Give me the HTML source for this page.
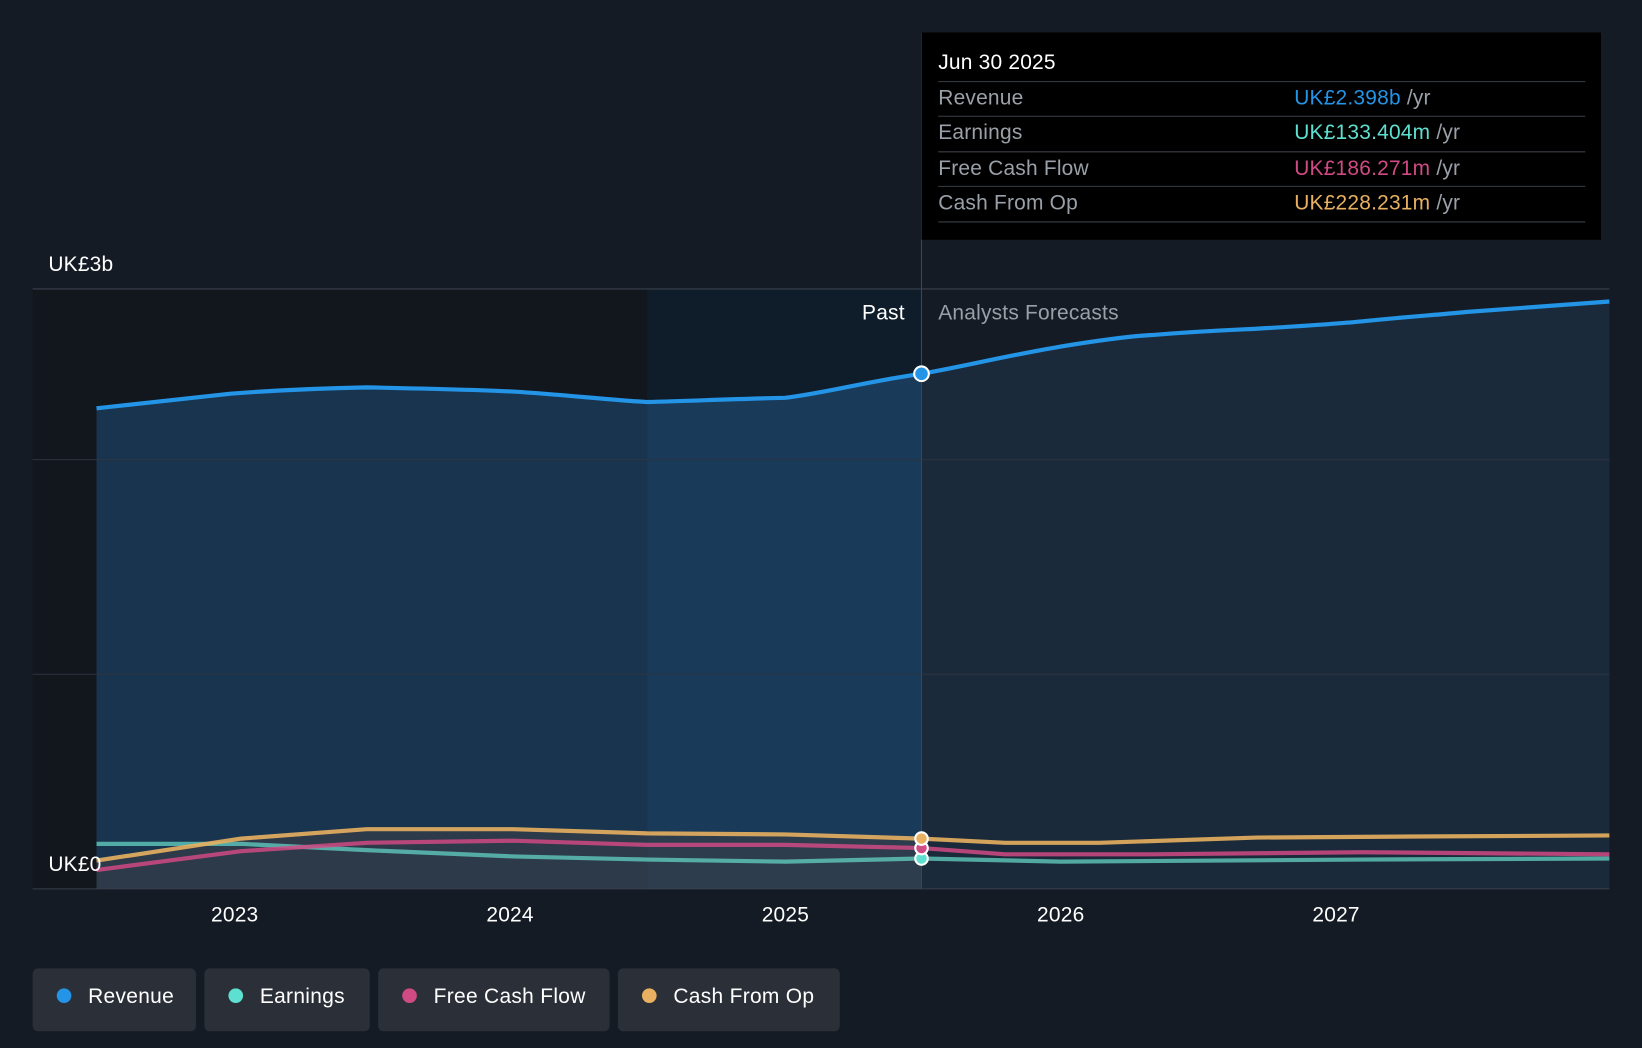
<!DOCTYPE html>
<html><head><meta charset="utf-8"><style>
html,body{margin:0;padding:0;background:#151b24;overflow:hidden}
svg{display:block;font-family:"Liberation Sans",sans-serif}
</style></head><body>
<svg width="1642" height="1048" viewBox="0 0 1568 1001" xmlns="http://www.w3.org/2000/svg">
<rect width="1568" height="1001" fill="#151b24"/>
<rect x="31" y="276" width="587" height="573" fill="#12161d"/>
<rect x="618" y="276" width="262" height="573" fill="#0f1d2b"/>
<path d="M92,390 C150,384 190,379 220,376 C260,373 300,371 350,370 C400,371 450,372 490,374 C540,377 580,382 618,384 C660,383 700,381 750,380 C790,375 830,364 880,357 L880,849 L92,849 Z" fill="#1b3a57" opacity="0.85"/>
<path d="M618,384 C660,383 700,381 750,380 C790,375 830,364 880,357 L880,849 L618,849 Z" fill="#1a4468" opacity="0.35"/>
<path d="M880,357 C920,350 960,340 1013,331 C1050,325 1080,321 1100,320 C1150,316 1180,315 1200,314 C1250,311 1280,309 1300,307 C1350,302 1370,301 1400,298 L1537,288 L1537,849 L880,849 Z" fill="#1b2a3a"/>
<path d="M92,822 L230,801 L350,792 L490,792 L618,796 L750,797 L880,801 L880,849 L92,849Z" fill="#3a3f48" opacity="0.6"/>
<g stroke="#2c3440" stroke-width="1">
<line x1="31" y1="276" x2="1537" y2="276" stroke="#3a414c"/>
<line x1="31" y1="439" x2="1537" y2="439"/>
<line x1="31" y1="644" x2="1537" y2="644"/>
<line x1="31" y1="849" x2="1537" y2="849" stroke="#3a414c"/>
<line x1="880" y1="31" x2="880" y2="849" stroke="#2b4a66"/>
</g>
<path d="M92,390 C150,384 190,379 220,376 C260,373 300,371 350,370 C400,371 450,372 490,374 C540,377 580,382 618,384 C660,383 700,381 750,380 C790,375 830,364 880,357 C920,350 960,340 1013,331 C1050,325 1080,321 1100,320 C1150,316 1180,315 1200,314 C1250,311 1280,309 1300,307 C1350,302 1370,301 1400,298 L1537,288" fill="none" stroke="#2394e6" stroke-width="4"/>
<path d="M92,806 L230,806 L350,812 L490,818 L618,821 L750,823 L880,820 L1013,823 L1300,821 L1537,820" fill="none" stroke="#5fc9bd" stroke-width="4" opacity="0.8"/>
<path d="M92,831 L230,813 L350,805 L490,803 L618,807 L750,807 L880,810 L960,816 L1100,816 L1300,814 L1537,816" fill="none" stroke="#d04a84" stroke-width="4" opacity="0.85"/>
<path d="M92,822 L230,801 L350,792 L490,792 L618,796 L750,797 L880,801 L960,805 L1050,805 L1200,800 L1350,799 L1537,798" fill="none" stroke="#e8b060" stroke-width="4" opacity="0.9"/>
<circle cx="880" cy="357" r="7" fill="#2394e6" stroke="#fff" stroke-width="2"/>
<circle cx="880" cy="820" r="6" fill="#5ee0d0" stroke="#fff" stroke-width="2"/>
<circle cx="880" cy="810" r="6" fill="#d04a84" stroke="#fff" stroke-width="2"/>
<circle cx="880" cy="801" r="6" fill="#e8b060" stroke="#fff" stroke-width="2"/>
<g font-size="20" fill="#fff" letter-spacing="0.2">
<text x="46" y="259">UK£3b</text>
<text x="46" y="832">UK£0</text>
<text x="864" y="305" text-anchor="end">Past</text>
<text x="896" y="305" fill="#9aa0a8">Analysts Forecasts</text>
<g text-anchor="middle"><text x="224" y="880">2023</text><text x="487" y="880">2024</text><text x="750" y="880">2025</text><text x="1013" y="880">2026</text><text x="1276" y="880">2027</text></g>
</g>
<rect x="880" y="31" width="649" height="198" fill="#000"/>
<g font-size="20" letter-spacing="0.2">
<text x="896" y="66" fill="#fff">Jun 30 2025</text>
<g stroke="#3a3f46"><line x1="896" y1="78" x2="1514" y2="78"/><line x1="896" y1="111" x2="1514" y2="111"/><line x1="896" y1="145" x2="1514" y2="145"/><line x1="896" y1="178" x2="1514" y2="178"/><line x1="896" y1="212" x2="1514" y2="212"/></g>
<g fill="#9aa0a8"><text x="896" y="100">Revenue</text><text x="896" y="133">Earnings</text><text x="896" y="167">Free Cash Flow</text><text x="896" y="200">Cash From Op</text></g>
<text x="1236" y="100" fill="#2394e6">UK£2.398b <tspan fill="#9aa0a8">/yr</tspan></text>
<text x="1236" y="133" fill="#5ee0d0">UK£133.404m <tspan fill="#9aa0a8">/yr</tspan></text>
<text x="1236" y="167" fill="#d04a84">UK£186.271m <tspan fill="#9aa0a8">/yr</tspan></text>
<text x="1236" y="200" fill="#e8b060">UK£228.231m <tspan fill="#9aa0a8">/yr</tspan></text>
</g>
<g font-size="20" fill="#fff" letter-spacing="0.3">
<rect x="31" y="925" width="156" height="60" rx="5" fill="#2a2f38"/><circle cx="61" cy="951" r="7" fill="#2394e6"/><text x="84" y="958">Revenue</text>
<rect x="195" y="925" width="158" height="60" rx="5" fill="#2a2f38"/><circle cx="225" cy="951" r="7" fill="#5ee0d0"/><text x="248" y="958">Earnings</text>
<rect x="361" y="925" width="221" height="60" rx="5" fill="#2a2f38"/><circle cx="391" cy="951" r="7" fill="#d04a84"/><text x="414" y="958">Free Cash Flow</text>
<rect x="590" y="925" width="212" height="60" rx="5" fill="#2a2f38"/><circle cx="620" cy="951" r="7" fill="#e8b060"/><text x="643" y="958">Cash From Op</text>
</g>
</svg>
</body></html>
